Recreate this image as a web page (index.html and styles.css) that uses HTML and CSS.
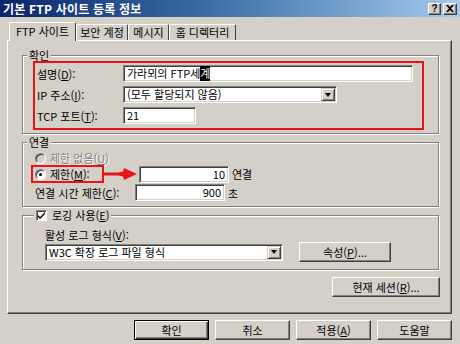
FILE: index.html
```html
<!DOCTYPE html>
<html lang="ko">
<head>
    <meta charset="UTF-8">
    <title>기본 FTP 사이트 등록 정보</title>
    <link rel="stylesheet" href="styles.css">
</head>
<body>
    <div class="window">
        <div class="titlebar">
            <span class="title">기본 FTP 사이트 등록 정보</span>
            <div class="caption-btns">
                <span class="cap-btn cap-help">?</span>
                <span class="cap-btn">
                    <svg width="8" height="7" viewBox="0 0 8 7"><path d="M0 0h2l2 2 2-2h2L5 3.5 8 7H6L4 5 2 7H0l3-3.5z" fill="#000"/></svg>
                </span>
            </div>
        </div>

        <div class="tabs">
            <div class="tab active w-tab1">FTP 사이트</div>
            <div class="tab w-tab2">보안 계정</div>
            <div class="tab w-tab3">메시지</div>
            <div class="tab w-tab4">홈 디렉터리</div>
        </div>

        <div class="panel">
            <!-- 확인 -->
            <fieldset class="group group-id">
                <legend>확인</legend>
                <div class="mark mark-id">
                    <div class="row">
                        <span class="label">설명(<u>D</u>):</span>
                        <div class="field w-desc">가라뫼의 FTP세<span class="ime">계</span></div>
                    </div>
                    <div class="row">
                        <span class="label">IP 주소(<u>I</u>):</span>
                        <div class="field combo w-ip">
                            <span class="combo-text">(모두 할당되지 않음)</span>
                            <span class="drop"><span class="tri"></span></span>
                        </div>
                    </div>
                    <div class="row">
                        <span class="label">TCP 포트(<u>T</u>):</span>
                        <div class="field w-port">21</div>
                    </div>
                </div>
            </fieldset>

            <!-- 연결 -->
            <fieldset class="group group-conn">
                <legend>연결</legend>
                <div class="row-radio disabled">
                    <span class="radio"></span>제한 없음(<u>U</u>)
                </div>
                <div class="row-limit">
                    <div class="mark mark-limit">
                        <span class="radio checked"></span>제한(<u>M</u>):
                    </div>
                    <svg class="arrow" width="35" height="18" viewBox="0 0 35 18">
                        <path d="M0 7.5 L14 7.5 L19 6.5 L20 3 L33 9 L20 15 L19 11.5 L14 10.5 L0 10.5 Z" fill="#e8141c"/>
                    </svg>
                    <div class="field num">10</div>
                    <span class="unit">연결</span>
                </div>
                <div class="row-timeout">
                    <span class="label-long">연결 시간 제한(<u>C</u>):</span>
                    <div class="field num">900</div>
                    <span class="unit">초</span>
                </div>
            </fieldset>

            <!-- 로깅 -->
            <fieldset class="group group-log">
                <legend><span class="check"><svg width="9" height="9" viewBox="0 0 9 9"><path d="M1 4l2 2 5-5v2L3 8 1 6z" fill="#000"/></svg></span>로깅 사용(<u>E</u>)</legend>
                <div class="log-label">활성 로그 형식(<u>V</u>):</div>
                <div class="log-row">
                    <div class="field combo w-log">
                        <span class="combo-text">W3C 확장 로그 파일 형식</span>
                        <span class="drop"><span class="tri"></span></span>
                    </div>
                    <button class="btn w-prop">속성(<u>P</u>)...</button>
                </div>
            </fieldset>

            <div class="session-row">
                <button class="btn w-session">현재 세션(<u>R</u>)...</button>
            </div>
        </div>

        <div class="buttons">
            <button class="btn default">확인</button>
            <button class="btn">취소</button>
            <button class="btn">적용(<u>A</u>)</button>
            <button class="btn">도움말</button>
        </div>
    </div>
</body>
</html>
```

FILE: styles.css
```css
/* Basic Styles */
body {
    margin: 0;
    background: #d4d0c8;
    font-family: "Noto Sans CJK KR", "Liberation Sans", sans-serif;
    font-size: 11px;
    color: #000;
}

.window {
    width: 460px;
    height: 344px;
    overflow: hidden;
    background: #d4d0c8;
}

/* Title Bar */
.titlebar {
    height: 17px;
    display: flex;
    align-items: center;
    justify-content: space-between;
    padding: 0 3px 0 3px;
    background: linear-gradient(90deg, #0a246a 0%, #3a6ea5 45%, #a6caf0 100%);
}

.title {
    color: #fff;
    font-size: 12px;
    font-weight: bold;
    line-height: 17px;
    letter-spacing: 0.2px;
}

.caption-btns {
    display: flex;
    gap: 2px;
}

.cap-btn {
    width: 14px;
    height: 12px;
    box-sizing: border-box;
    display: flex;
    align-items: center;
    justify-content: center;
    background: #d4d0c8;
    border: 1px solid;
    border-color: #fff #404040 #404040 #fff;
    box-shadow: inset -1px -1px #808080;
    font-family: "Liberation Sans", sans-serif;
    font-weight: bold;
    font-size: 10px;
    line-height: 10px;
}

.cap-help {
    width: 13px;
}

/* Tabs */
.tabs {
    display: flex;
    align-items: flex-end;
    height: 18px;
    margin: 5px 0 0 9px;
    position: relative;
    z-index: 1;
}

.tab {
    height: 16px;
    box-sizing: border-box;
    display: flex;
    justify-content: center;
    line-height: 14px;
    background: #d4d0c8;
    border: 1px solid;
    border-bottom: none;
    border-color: #fff #404040 #404040 #fff;
    border-radius: 2px 2px 0 0;
}

.tab.active {
    height: 19px;
    margin-bottom: -1px;
    padding-top: 1px;
}

.w-tab1 { width: 67px; }
.w-tab2 { width: 52px; }
.w-tab3 { width: 41px; }
.w-tab4 { width: 67px; }

/* Panel */
.panel {
    height: 274px;
    box-sizing: border-box;
    margin: 0 8px 0 7px;
    padding: 8px 12px 0 14px;
    border: 1px solid;
    border-color: #fff #404040 #404040 #fff;
    box-shadow: inset -1px -1px #808080;
}

/* Group Boxes */
.group {
    margin: 0;
    border: 1px solid #808080;
    box-shadow: inset 1px 1px #fff, 1px 1px #fff;
    min-width: 0;
}

.group legend {
    padding: 0 2px;
    line-height: 12px;
    background: #d4d0c8;
}

.group-id {
    padding: 0 13px 3px 10px;
}

.group-id legend {
    margin-left: -6px;
}

.group-conn {
    margin-top: 2px;
    padding: 0 8px 5px 8px;
}

.group-conn legend {
    margin-left: -4px;
}

.group-log {
    margin-top: 1px;
    padding: 0 8px 7px 22px;
}

.group-log legend {
    margin-left: -11px;
    line-height: 14px;
    display: flex;
    align-items: center;
}

/* Red Marks */
.mark {
    border: 2px solid #e8141c;
    box-sizing: border-box;
}

.mark-id {
    width: 391px;
    height: 69px;
    padding: 2px 0 0 2px;
}

.mark-limit {
    width: 73px;
    height: 18px;
    display: flex;
    align-items: center;
    padding-left: 2px;
}

/* Rows */
.row {
    display: flex;
    align-items: center;
    height: 17px;
    margin-bottom: 4px;
}

.label {
    width: 86px;
}

/* Fields */
.field {
    height: 17px;
    box-sizing: border-box;
    background: #fff;
    border: 1px solid;
    border-color: #808080 #fff #fff #808080;
    box-shadow: inset 1px 1px #404040, inset -1px -1px #d4d0c8;
    padding: 0 3px;
    line-height: 15px;
    white-space: nowrap;
    overflow: hidden;
}

.w-desc { width: 290px; }
.w-ip { width: 214px; }
.w-port { width: 73px; }
.w-log { width: 238px; }

.ime {
    background: #000;
    color: #fff;
}

.combo {
    display: flex;
    padding-right: 1px;
}

.combo-text {
    flex: 1;
}

.drop {
    width: 14px;
    height: 13px;
    margin-top: 1px;
    box-sizing: border-box;
    display: flex;
    align-items: center;
    justify-content: center;
    background: #d4d0c8;
    border: 1px solid;
    border-color: #d4d0c8 #404040 #404040 #d4d0c8;
    box-shadow: inset 1px 1px #fff, inset -1px -1px #808080;
}

.tri {
    width: 0;
    height: 0;
    border-left: 3.5px solid transparent;
    border-right: 3.5px solid transparent;
    border-top: 4px solid #000;
}

.num {
    width: 90px;
    text-align: right;
}

.unit {
    margin-left: 3px;
}

/* Radios and Checkbox */
.radio {
    width: 11px;
    height: 11px;
    box-sizing: border-box;
    border-radius: 50%;
    background: #fff;
    border: 1px solid;
    border-color: #808080 #fff #fff #808080;
    box-shadow: inset 1px 1px #404040;
    margin-right: 4px;
    display: inline-flex;
    align-items: center;
    justify-content: center;
}

.radio.checked::after {
    content: "";
    width: 3px;
    height: 3px;
    border-radius: 50%;
    background: #000;
}

.row-radio {
    display: flex;
    align-items: center;
    height: 14px;
    margin-top: 3px;
    padding-left: 4px;
}

.disabled {
    color: #808080;
    text-shadow: 1px 1px #fff;
}

.disabled .radio {
    background: #d4d0c8;
}

.row-limit,
.row-timeout {
    display: flex;
    align-items: center;
}

.row-limit {
    height: 18px;
}

.row-timeout {
    height: 17px;
    margin-top: 1px;
}

.label-long {
    width: 104px;
    padding-left: 4px;
    box-sizing: border-box;
}

.check {
    width: 11px;
    height: 11px;
    box-sizing: border-box;
    background: #fff;
    border: 1px solid;
    border-color: #808080 #fff #fff #808080;
    box-shadow: inset 1px 1px #404040;
    display: inline-flex;
    align-items: center;
    justify-content: center;
    margin-right: 5px;
}

.log-label {
    margin-top: 6px;
    line-height: 14px;
}

.log-row {
    display: flex;
    align-items: center;
    height: 20px;
}

/* Buttons */
.btn {
    height: 20px;
    box-sizing: border-box;
    padding: 0;
    font-family: inherit;
    font-size: 11px;
    color: #000;
    background: #d4d0c8;
    border: 1px solid;
    border-color: #fff #404040 #404040 #fff;
    box-shadow: inset -1px -1px #808080;
    display: flex;
    align-items: center;
    justify-content: center;
}

.btn.default {
    border-color: #000;
    box-shadow: inset 1px 1px #fff, inset -1px -1px #404040, inset -2px -2px #808080;
}

.w-prop {
    width: 92px;
    margin-left: 16px;
}

.session-row {
    display: flex;
    justify-content: flex-end;
    margin: 7px -1px 0 0;
}

.w-session {
    width: 108px;
}

.buttons {
    display: flex;
    justify-content: flex-end;
    gap: 6px;
    margin-top: 6px;
    padding-right: 8px;
}

.buttons .btn {
    width: 75px;
}
```
